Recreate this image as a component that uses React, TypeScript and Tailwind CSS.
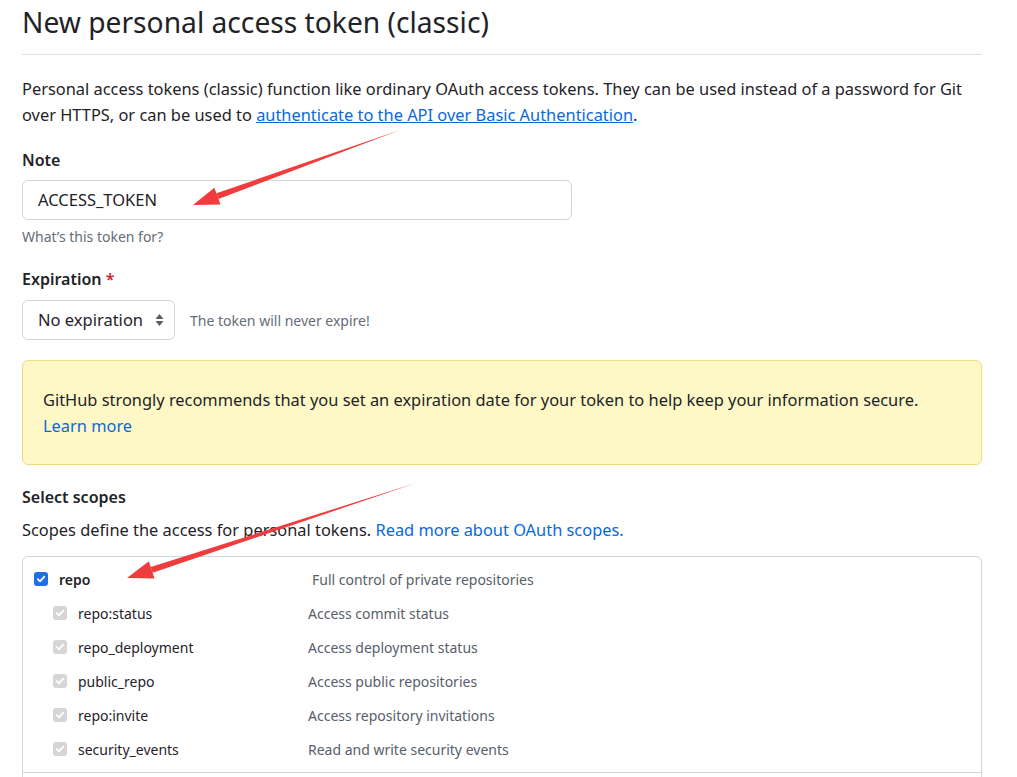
import React from "react";

const scopes = [
  { name: "repo:status", desc: "Access commit status" },
  { name: "repo_deployment", desc: "Access deployment status" },
  { name: "public_repo", desc: "Access public repositories" },
  { name: "repo:invite", desc: "Access repository invitations" },
  { name: "security_events", desc: "Read and write security events" },
];

const Check = ({ disabled }: { disabled?: boolean }) => (
  <span
    className={
      "flex items-center justify-center w-[14px] h-[14px] rounded-[3px] " +
      (disabled ? "bg-[#d6d6d6]" : "bg-[#1f6fe5]")
    }
  >
    <svg width="10" height="10" viewBox="0 0 10 10">
      <path d="M1.8 5.2 L4 7.4 L8.3 2.6" fill="none" stroke="white" strokeWidth="1.8" strokeLinecap="round" strokeLinejoin="round" />
    </svg>
  </span>
);

// red annotation arrow drawn over the page
const Arrow = ({ x1, y1, x2, y2 }: { x1: number; y1: number; x2: number; y2: number }) => {
  const a = Math.atan2(y2 - y1, x2 - x1);
  const len = 26;
  const w = 9;
  const bx = x2 - len * Math.cos(a);
  const by = y2 - len * Math.sin(a);
  const px = -Math.sin(a);
  const py = Math.cos(a);
  return (
    <g>
      <polygon
        points={`${x1},${y1} ${bx + px * 3},${by + py * 3} ${bx - px * 3},${by - py * 3}`}
        fill="#f03c3c"
      />
      <polygon
        points={`${x2},${y2} ${bx + px * w},${by + py * w} ${bx - px * w},${by - py * w}`}
        fill="#f03c3c"
      />
    </g>
  );
};

export default function App() {
  return (
    <div className="relative w-[1017px] h-[777px] overflow-hidden bg-white text-[#1f2328] font-['Noto_Sans',sans-serif]">
      <div className="ml-[22px] w-[960px]">
        <h1 className="text-[28.2px] leading-[44px] pb-[10px] border-b border-[#d8dee4]">
          New personal access token (classic)
        </h1>
        <p className="mt-[21px] text-[16.4px] leading-[26px]">
          Personal access tokens (classic) function like ordinary OAuth access tokens. They can be used instead of a password for Git over HTTPS, or can be used to{" "}
          <a className="text-[#0969da] underline">authenticate to the API over Basic Authentication</a>.
        </p>

        <div className="mt-[20px] text-[16px] leading-[24px] font-semibold">Note</div>
        <div className="mt-[8px] w-[550px] h-[40px] border border-[#d0d7de] rounded-[6px] flex items-center px-[15px] text-[16.5px]">
          ACCESS_TOKEN
        </div>
        <div className="mt-[7px] text-[14px] leading-[20px] text-[#656d76]">What’s this token for?</div>

        <div className="mt-[20px] text-[16px] leading-[24px] font-semibold">
          Expiration <span className="text-[#cf222e]">*</span>
        </div>
        <div className="mt-[9px] flex items-center gap-[15px]">
          <div className="w-[153px] h-[40px] border border-[#d0d7de] rounded-[6px] flex items-center justify-between pl-[15px] pr-[10px] text-[16.5px]">
            <span>No expiration</span>
            <svg width="9" height="14" viewBox="0 0 9 14">
              <path d="M4.5 1 L8.5 6 L0.5 6 Z M4.5 13 L8.5 8 L0.5 8 Z" fill="#57606a" />
            </svg>
          </div>
          <span className="text-[14px] text-[#656d76]">The token will never expire!</span>
        </div>

        <div className="mt-[20px] h-[105px] bg-[#fef8c6] border border-[#eedc82] rounded-[6px] pt-[26px] px-[20px] text-[16.4px] leading-[26px]">
          <div>GitHub strongly recommends that you set an expiration date for your token to help keep your information secure.</div>
          <a className="text-[#0969da]">Learn more</a>
        </div>

        <div className="mt-[20px] text-[16px] leading-[24px] font-semibold">Select scopes</div>
        <p className="mt-[8px] text-[16.4px] leading-[26px]">
          Scopes define the access for personal tokens. <a className="text-[#0969da]">Read more about OAuth scopes.</a>
        </p>

        <div className="mt-[13px] border border-[#d0d7de] rounded-t-[6px] pt-[5px] h-[240px]">
          <div className="h-[34px] flex items-center pl-[11px]">
            <Check />
            <span className="ml-[11px] w-[253px] text-[14px] font-semibold">repo</span>
            <span className="text-[14px] text-[#57606a]">Full control of private repositories</span>
          </div>
          {scopes.map((s) => (
            <div key={s.name} className="h-[34px] flex items-center pl-[30px]">
              <Check disabled />
              <span className="ml-[11px] w-[230px] text-[14px]">{s.name}</span>
              <span className="text-[14px] text-[#57606a]">{s.desc}</span>
            </div>
          ))}
          <div className="mt-[6px] border-t border-[#d0d7de]" />
        </div>
      </div>

      <svg className="absolute inset-0 pointer-events-none" width="1017" height="777">
        <Arrow x1={400} y1={130} x2={193} y2={205} />
        <Arrow x1={416} y1={483} x2={127} y2={578} />
      </svg>
    </div>
  );
}
